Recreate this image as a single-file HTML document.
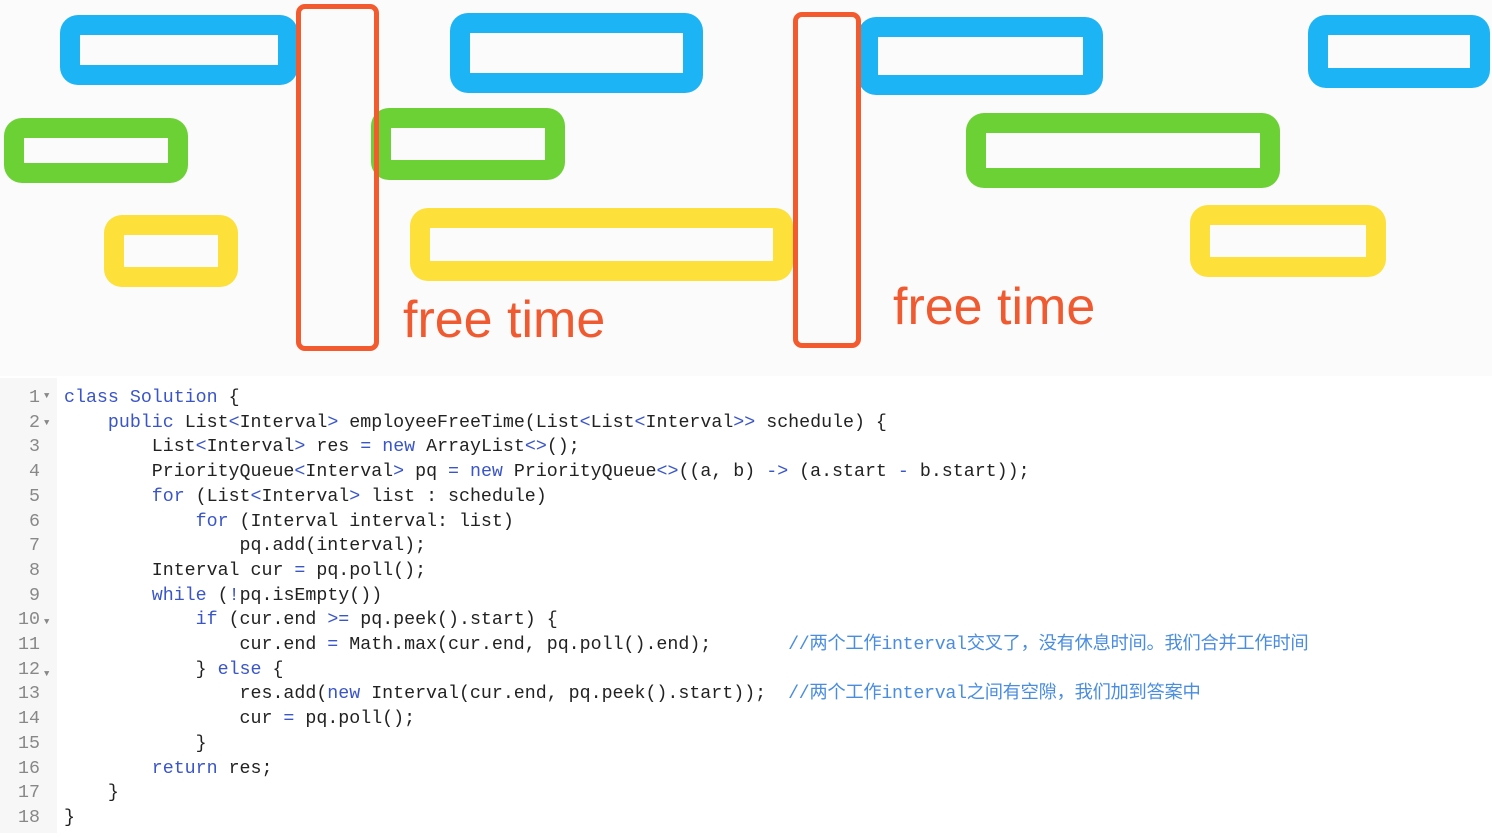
<!DOCTYPE html>
<html><head><meta charset="utf-8"><style>
body{margin:0;width:1492px;height:833px;overflow:hidden;background:#fff;position:relative;font-family:"Liberation Sans",sans-serif}
.top{position:absolute;left:0;top:0;width:1492px;height:376px;background:#fbfbfb}
.b{position:absolute;box-sizing:border-box;border-radius:18px;border:20px solid}
.bl{border-color:#1db4f6}.gr{border-color:#6bd134}.ye{border-color:#fde03a}
.rd{position:absolute;box-sizing:border-box;border:5px solid #f35a2e;border-radius:9px}
.ft{position:absolute;color:#f05a30;font-size:52px;line-height:1;letter-spacing:0px}
.code{position:absolute;left:0;top:378px;width:1345px;height:455px;background:#fff}
.gut{position:absolute;left:0;top:378px;width:57px;height:455px;background:#f7f7f7}
pre{margin:0;position:absolute;top:386px;font-family:"Liberation Mono","Noto Sans CJK SC",monospace;font-size:18.3px;line-height:24.7px;color:#222}
.ln{left:0;width:40px;text-align:right;color:#888}
.ar{left:44px;width:12px;color:#888}
.ar span{font-size:9px;position:relative;top:-4px}
.src{left:64px}
.k{color:#3a55c8}.c{color:#4a8de0;font-size:18.3px;letter-spacing:-0.3px}
</style></head><body>
<div class="top"></div>
<div class="b bl" style="left:60px;top:15px;width:238px;height:70px"></div>
<div class="b bl" style="left:450px;top:13px;width:253px;height:80px"></div>
<div class="b bl" style="left:858px;top:17px;width:245px;height:78px"></div>
<div class="b bl" style="left:1308px;top:15px;width:182px;height:73px"></div>
<div class="b gr" style="left:4px;top:118px;width:184px;height:65px"></div>
<div class="b gr" style="left:371px;top:108px;width:194px;height:72px"></div>
<div class="b gr" style="left:966px;top:113px;width:314px;height:75px"></div>
<div class="b ye" style="left:104px;top:215px;width:134px;height:72px"></div>
<div class="b ye" style="left:410px;top:208px;width:383px;height:73px"></div>
<div class="b ye" style="left:1190px;top:205px;width:196px;height:72px"></div>
<div class="rd" style="left:296px;top:4px;width:83px;height:347px"></div>
<div class="rd" style="left:793px;top:12px;width:68px;height:336px"></div>
<div class="ft" style="left:403px;top:294px">free time</div>
<div class="ft" style="left:893px;top:281px">free time</div>
<div class="code"></div><div class="gut"></div>
<pre class="ln">1
2
3
4
5
6
7
8
9
10
11
12
13
14
15
16
17
18</pre>
<pre class="ar"><span>▼</span>
<span>▼</span>
 
 
 
 
 
 
 
<span>▼</span>
 
<span>▼</span>
 
 
 
 
 
 </pre>
<pre class="src"><span class="k">class</span> <span class="k">Solution</span> {
    <span class="k">public</span> List<span class="k">&lt;</span>Interval<span class="k">&gt;</span> employeeFreeTime(List<span class="k">&lt;</span>List<span class="k">&lt;</span>Interval<span class="k">&gt;&gt;</span> schedule) {
        List<span class="k">&lt;</span>Interval<span class="k">&gt;</span> res <span class="k">=</span> <span class="k">new</span> ArrayList<span class="k">&lt;&gt;</span>();
        PriorityQueue<span class="k">&lt;</span>Interval<span class="k">&gt;</span> pq <span class="k">=</span> <span class="k">new</span> PriorityQueue<span class="k">&lt;&gt;</span>((a, b) <span class="k">-&gt;</span> (a.start <span class="k">-</span> b.start));
        <span class="k">for</span> (List<span class="k">&lt;</span>Interval<span class="k">&gt;</span> list : schedule)
            <span class="k">for</span> (Interval interval: list)
                pq.add(interval);
        Interval cur <span class="k">=</span> pq.poll();
        <span class="k">while</span> (<span class="k">!</span>pq.isEmpty())
            <span class="k">if</span> (cur.end <span class="k">&gt;=</span> pq.peek().start) {
                cur.end <span class="k">=</span> Math.max(cur.end, pq.poll().end);       <span class="c">//两个工作interval交叉了，没有休息时间。我们合并工作时间</span>
            } <span class="k">else</span> {
                res.add(<span class="k">new</span> Interval(cur.end, pq.peek().start));  <span class="c">//两个工作interval之间有空隙，我们加到答案中</span>
                cur <span class="k">=</span> pq.poll();
            }
        <span class="k">return</span> res;
    }
}</pre>
</body></html>
